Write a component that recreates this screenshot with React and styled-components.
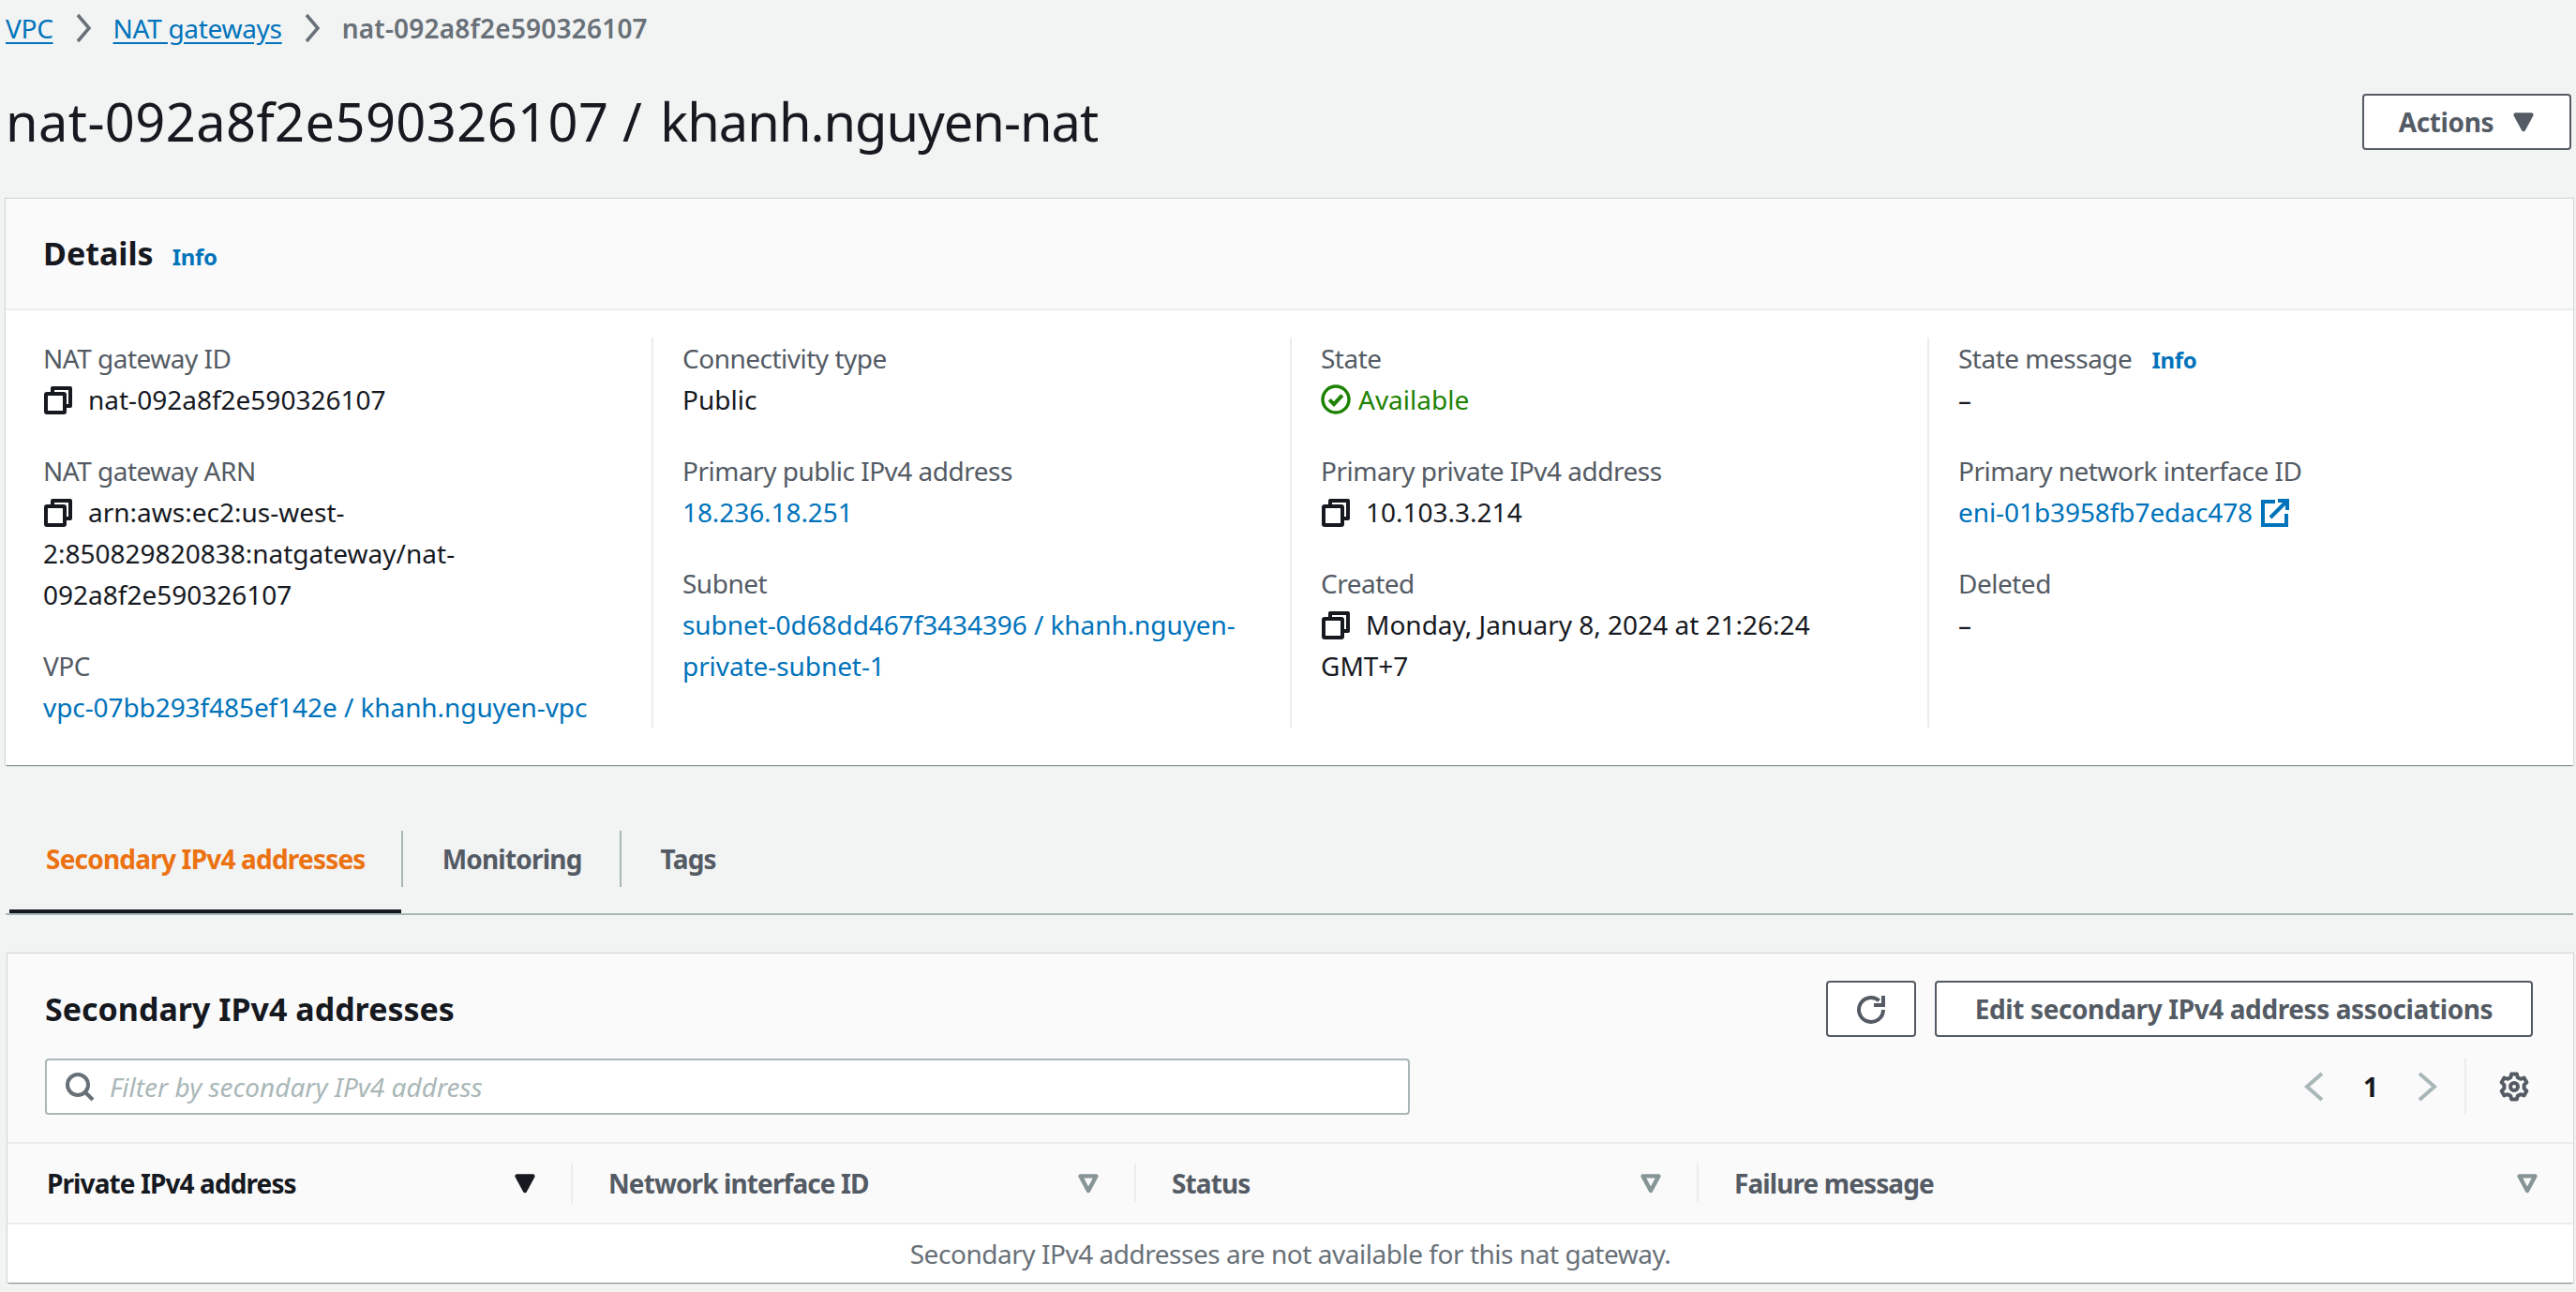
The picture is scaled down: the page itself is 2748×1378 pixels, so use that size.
import React from 'react'
import styled, { createGlobalStyle } from 'styled-components'

const GlobalStyle = createGlobalStyle`
	html, body {
		margin: 0;
		padding: 0;
		background: #f2f3f3;
	}
	body {
		font-family: "Noto Sans", "Open Sans", sans-serif;
		font-size: 28px;
		line-height: 44px;
		color: #16191f;
	}
	* {
		box-sizing: border-box;
	}
`

const Icon = ({ size = 32, color = 'currentColor', width = 2, children }) => (
	<svg width={size} height={size} viewBox="0 0 16 16" fill="none" stroke={color} strokeWidth={width} style={{ flex: 'none' }}>
		{children}
	</svg>
)

const CopyIcon = () => (
	<CopyWrap>
		<Icon>
			<path d="M5 3.5V1.5h9.5v9.5h-2" strokeLinejoin="round" />
			<rect x="1.5" y="4.5" width="10" height="10" rx="0.5" />
		</Icon>
	</CopyWrap>
)

const Caret = ({ filled, color }) => (
	<svg width="24" height="28" viewBox="0 0 12 14" style={{ flex: 'none' }}>
		<path d="M1.8 3.2h8.4L6 11z" fill={filled ? color : 'none'} stroke={color} strokeWidth="2.2" strokeLinejoin="round" />
	</svg>
)

const Details = [
	[
		{ label: 'NAT gateway ID', value: 'nat-092a8f2e590326107', copy: true },
		{ label: 'NAT gateway ARN', value: 'arn:aws:ec2:us-west-2:850829820838:natgateway/nat-092a8f2e590326107', copy: true },
		{ label: 'VPC', value: 'vpc-07bb293f485ef142e / khanh.nguyen-vpc', link: true },
	],
	[
		{ label: 'Connectivity type', value: 'Public' },
		{ label: 'Primary public IPv4 address', value: '18.236.18.251', link: true },
		{ label: 'Subnet', value: 'subnet-0d68dd467f3434396 / khanh.nguyen-private-subnet-1', link: true },
	],
	[
		{ label: 'State', status: 'Available' },
		{ label: 'Primary private IPv4 address', value: '10.103.3.214', copy: true },
		{ label: 'Created', value: 'Monday, January 8, 2024 at 21:26:24 GMT+7', copy: true },
	],
	[
		{ label: 'State message', value: '–', info: true },
		{ label: 'Primary network interface ID', value: 'eni-01b3958fb7edac478', link: true, external: true },
		{ label: 'Deleted', value: '–' },
	],
]

const Columns = [
	{ title: 'Private IPv4 address', sorted: true },
	{ title: 'Network interface ID' },
	{ title: 'Status' },
	{ title: 'Failure message' },
]

const App = () => {
	return (
		<Page>
			<GlobalStyle />
			<Breadcrumbs>
				<Crumb href="#">VPC</Crumb>
				<CrumbArrow viewBox="0 0 18 32"><path d="M3 2l12 14-12 14" /></CrumbArrow>
				<Crumb href="#">NAT gateways</Crumb>
				<CrumbArrow viewBox="0 0 18 32"><path d="M3 2l12 14-12 14" /></CrumbArrow>
				<CrumbCurrent>nat-092a8f2e590326107</CrumbCurrent>
			</Breadcrumbs>

			<TitleRow>
				<Title>
					<TitleId>nat-092a8f2e590326107</TitleId> / <TitleName>khanh.nguyen-nat</TitleName>
				</Title>
				<ActionsButton>
					Actions
					<Caret filled color="#545b64" />
				</ActionsButton>
			</TitleRow>

			<DetailsCard>
				<CardHeader>
					<CardTitle>Details</CardTitle>
					<InfoLink href="#">Info</InfoLink>
				</CardHeader>
				<DetailsGrid>
					{Details.map((col, i) => (
						<DetailsColumn key={i}>
							{col.map((item) => (
								<div key={item.label}>
									<FieldLabel>
										{item.label}
										{item.info && <InfoLink href="#">Info</InfoLink>}
									</FieldLabel>
									{item.status ? (
										<Status>
											<Icon size={32} width={1.7}>
												<circle cx="8" cy="8" r="7" />
												<path d="M4.6 8.2l2.4 2.4 4.4-4.8" strokeWidth="2" />
											</Icon>
											{item.status}
										</Status>
									) : (
										<FieldValue>
											{item.copy && <CopyIcon />}
											{item.link ? <ValueLink href="#">{item.value}</ValueLink> : item.value}
											{item.external && (
												<ExternalWrap>
													<Icon color="#0073bb">
														<path d="M8 2H1.5v12.5H14V8.5" />
														<path d="M5.5 10.5L14 2M9.5 1.5h5v5" />
													</Icon>
												</ExternalWrap>
											)}
										</FieldValue>
									)}
								</div>
							))}
						</DetailsColumn>
					))}
				</DetailsGrid>
			</DetailsCard>

			<Tabs>
				<Tab $active>Secondary IPv4 addresses</Tab>
				<Tab $divider>Monitoring</Tab>
				<Tab $divider>Tags</Tab>
			</Tabs>

			<TableCard>
				<TableHeader>
					<TableTitleRow>
						<TableTitle>Secondary IPv4 addresses</TableTitle>
						<TableActions>
							<RefreshButton>
								<Icon color="#545b64">
									<path d="M14.5 8.5a6.5 6.5 0 1 1-2.2-4.9" />
									<path d="M14.5 1v5h-5" />
								</Icon>
							</RefreshButton>
							<PlainButton>Edit secondary IPv4 address associations</PlainButton>
						</TableActions>
					</TableTitleRow>
					<FilterRow>
						<FilterBox>
							<Icon color="#687078">
								<circle cx="7" cy="7" r="5.5" />
								<path d="M11 11l4 4" />
							</Icon>
							<FilterText>Filter by secondary IPv4 address</FilterText>
						</FilterBox>
						<Pager>
							<PagerIcon>
								<Icon color="#aab7b8">
									<path d="M12 1L4 8l8 7" />
								</Icon>
							</PagerIcon>
							<PageNumber>1</PageNumber>
							<PagerIcon>
								<Icon color="#aab7b8">
									<path d="M4 1l8 7-8 7" />
								</Icon>
							</PagerIcon>
							<PagerDivider />
							<GearWrap>
								<Icon color="#545b64">
									<circle cx="8" cy="8" r="2" />
									<path d="M6.6 1.2h2.8l.5 1.9 1.5.8 1.9-.6 1.4 2.4-1.4 1.4v1.8l1.4 1.4-1.4 2.4-1.9-.6-1.5.8-.5 1.9H6.6l-.5-1.9-1.5-.8-1.9.6-1.4-2.4 1.4-1.4V7.1L1.3 5.7l1.4-2.4 1.9.6 1.5-.8z" strokeLinejoin="round" />
								</Icon>
							</GearWrap>
						</Pager>
					</FilterRow>
				</TableHeader>
				<HeadRow>
					{Columns.map((col, i) => (
						<HeadCell key={col.title} $sorted={col.sorted} $first={i === 0}>
							<span>{col.title}</span>
							<Caret filled={col.sorted} color={col.sorted ? '#16191f' : '#879596'} />
						</HeadCell>
					))}
				</HeadRow>
				<EmptyRow>Secondary IPv4 addresses are not available for this nat gateway.</EmptyRow>
			</TableCard>
		</Page>
	)
}

export default App

const Page = styled.div`
	width: 2748px;
	height: 1378px;
	overflow: hidden;
	padding: 0 3px 0 6px;
`

const Breadcrumbs = styled.nav`
	display: flex;
	align-items: center;
	height: 60px;
	gap: 23px;
`

const Crumb = styled.a`
	color: #0073bb;
	letter-spacing: -0.3px;
	text-decoration: underline;
	text-underline-offset: 4px;
`

const CrumbArrow = styled.svg`
	width: 18px;
	height: 32px;
	fill: none;
	stroke: #687078;
	stroke-width: 3.5;
`

const CrumbCurrent = styled.span`
	color: #687078;
	font-weight: 600;
	letter-spacing: 0.2px;
`

const TitleRow = styled.div`
	display: flex;
	align-items: center;
	justify-content: space-between;
	height: 141px;
	margin-bottom: 11px;
	padding-bottom: 1px;
`

const Title = styled.h1`
	margin: 0 0 3px;
	font-size: 56px;
	line-height: 80px;
	font-weight: 400;
	color: #16191f;
`

const TitleId = styled.span`
	letter-spacing: 0.4px;
`

const TitleName = styled.span`
	margin-left: 5px;
	letter-spacing: -1px;
`

const ButtonBase = styled.button`
	display: flex;
	align-items: center;
	justify-content: center;
	height: 60px;
	padding: 0;
	background: #ffffff;
	border: 2px solid #545b64;
	border-radius: 4px;
	color: #545b64;
	font-family: inherit;
	font-size: 28px;
	font-weight: 700;
	letter-spacing: -0.4px;
`

const ActionsButton = styled(ButtonBase)`
	width: 223px;
	gap: 20px;
	margin-right: 2px;
`

const DetailsCard = styled.section`
	height: 604px;
	background: #ffffff;
	box-shadow: 0 2px 1px -1px #879596, 0 0 1px 1px rgba(0, 28, 36, 0.12);
`

const CardHeader = styled.header`
	display: flex;
	align-items: baseline;
	gap: 20px;
	height: 119px;
	padding: 36px 40px 0;
	background: #fafafa;
	border-bottom: 2px solid #eaeded;
`

const CardTitle = styled.h2`
	margin: 0;
	font-size: 34px;
	line-height: 44px;
	font-weight: 700;
	color: #16191f;
`

const InfoLink = styled.a`
	color: #0073bb;
	font-size: 24px;
	font-weight: 700;
	letter-spacing: -0.3px;
	text-decoration: none;
`

const DetailsGrid = styled.div`
	display: grid;
	grid-template-columns: 689px 681px 680px 1fr;
	padding: 29px 0 0;
	height: 445px;
`

const DetailsColumn = styled.div`
	display: flex;
	flex-direction: column;
	gap: 32px;
	height: 416px;
	padding: 0 32px 0 40px;

	& + & {
		border-left: 2px solid #eaeded;
		padding-left: 31px;
	}
`

const FieldLabel = styled.div`
	display: flex;
	gap: 21px;
	align-items: baseline;
	height: 44px;
	color: #545b64;
	letter-spacing: -0.5px;
`

const FieldValue = styled.div`
	color: #16191f;
	overflow-wrap: anywhere;
`

const ValueLink = styled.a`
	color: #0073bb;
	letter-spacing: -0.08px;
	text-decoration: none;
`

// the 32px icons sit in a shorter box so they don't push the 44px line apart
const CopyWrap = styled.span`
	display: inline-block;
	width: 32px;
	height: 20px;
	vertical-align: -2px;
	margin-right: 16px;

	svg {
		display: block;
		margin-top: -8px;
	}
`

const ExternalWrap = styled(CopyWrap)`
	margin-right: 0;
	margin-left: 8px;
`

const Status = styled.div`
	display: flex;
	align-items: center;
	gap: 8px;
	color: #1d8102;
`

const Tabs = styled.nav`
	display: flex;
	align-items: flex-end;
	height: 160px;
	padding-left: 4px;
	border-bottom: 2px solid #aab7b8;
`

const Tab = styled.div`
	position: relative;
	display: flex;
	align-items: center;
	height: 88px;
	padding: ${({ $active }) => ($active ? '0 38px 24px 39px' : '0 40px 24px 44px')};
	font-weight: 700;
	letter-spacing: -0.8px;
	color: ${({ $active }) => ($active ? '#ec7211' : '#545b64')};
	border-bottom: 4px solid ${({ $active }) => ($active ? '#16191f' : 'transparent')};

	&::before {
		content: '';
		display: ${({ $divider }) => ($divider ? 'block' : 'none')};
		position: absolute;
		left: 0;
		top: 0;
		height: 60px;
		width: 2px;
		background: #aab7b8;
	}
`

const TableCard = styled.section`
	height: 351px;
	margin: 41px 0 0 2px;
	background: #ffffff;
	box-shadow: 0 2px 1px -1px #879596, 0 0 1px 1px rgba(0, 28, 36, 0.12);
`

const TableHeader = styled.header`
	height: 203px;
	padding: 29px 43px 0 40px;
	background: #fafafa;
	border-bottom: 2px solid #eaeded;
`

const TableTitleRow = styled.div`
	display: flex;
	align-items: center;
	justify-content: space-between;
	height: 60px;
`

const TableTitle = styled.h2`
	margin: 0;
	font-size: 34px;
	line-height: 44px;
	font-weight: 700;
`

const TableActions = styled.div`
	display: flex;
	gap: 20px;
`

const RefreshButton = styled(ButtonBase)`
	width: 96px;
`

const PlainButton = styled(ButtonBase)`
	width: 638px;
`

const FilterRow = styled.div`
	display: flex;
	justify-content: space-between;
	margin-top: 23px;
`

const FilterBox = styled.div`
	display: flex;
	align-items: center;
	gap: 16px;
	width: 1456px;
	height: 60px;
	padding: 0 19px;
	background: #ffffff;
	border: 2px solid #aab7b8;
	border-radius: 4px;
`

const FilterText = styled.span`
	color: #aab7b8;
	font-style: italic;
`

const Pager = styled.div`
	display: flex;
	align-items: center;
	height: 60px;
	margin-right: 4px;
`

const PagerIcon = styled.span`
	display: flex;
`

const PageNumber = styled.span`
	width: 88px;
	text-align: center;
	font-weight: 700;
	color: #16191f;
`

const PagerDivider = styled.span`
	width: 2px;
	height: 60px;
	margin-left: 24px;
	background: #eaeded;
`

const GearWrap = styled.span`
	display: flex;
	margin-left: 35px;
`

const HeadRow = styled.div`
	display: grid;
	grid-template-columns: 601px 601px 600px 1fr;
	align-items: center;
	height: 86px;
	background: #fafafa;
	border-bottom: 2px solid #eaeded;
`

const HeadCell = styled.div`
	display: flex;
	align-items: center;
	justify-content: space-between;
	height: 42px;
	padding: 0 37px 0 ${({ $first }) => ($first ? '42px' : '38px')};
	font-weight: 700;
	letter-spacing: -0.9px;
	color: ${({ $sorted }) => ($sorted ? '#16191f' : '#545b64')};
	border-left: ${({ $first }) => ($first ? 'none' : '2px solid #eaeded')};
`

const EmptyRow = styled.div`
	display: flex;
	align-items: center;
	justify-content: center;
	height: 62px;
	color: #687078;
	letter-spacing: -0.47px;
`
